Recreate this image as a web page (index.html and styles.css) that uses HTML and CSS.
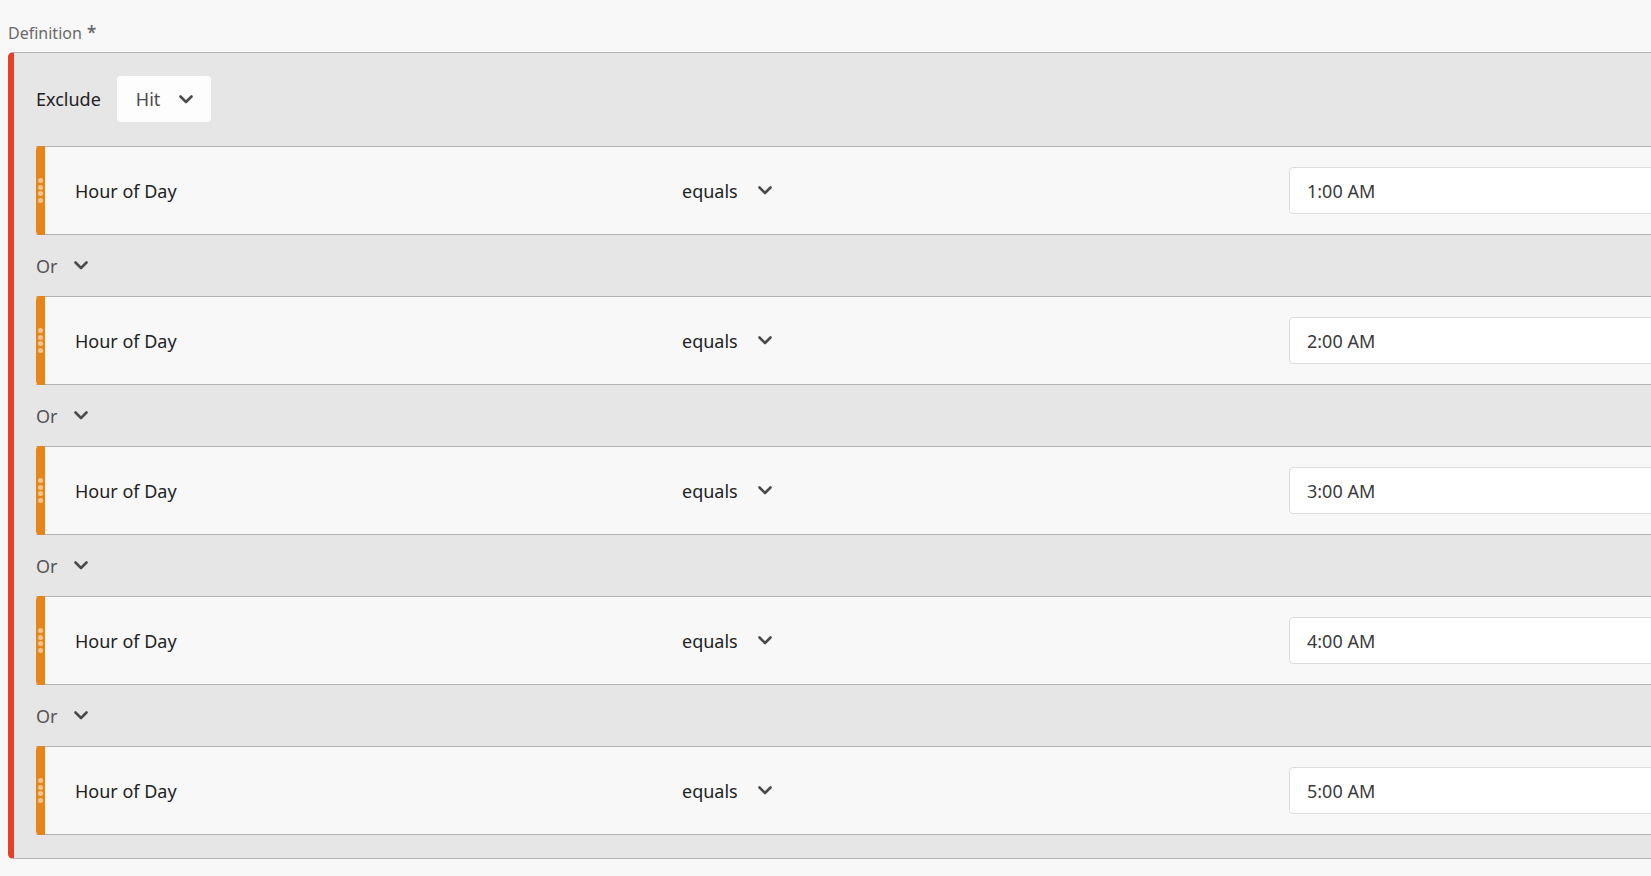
FILE: index.html
```html
<!DOCTYPE html>
<html>
<head>
<meta charset="utf-8">
<link rel="stylesheet" href="styles.css">
</head>
<body>
<div class="page">
  <div class="field-label">Definition <span class="req">*</span></div>
  <div class="container">
    <div class="header">
      <span class="exclude">Exclude</span>
      <div class="picker">
        <span>Hit</span>
        <svg class="chev" viewBox="0 0 14 9" width="14" height="9"><polyline points="1.5,1.5 7,7 12.5,1.5"/></svg>
      </div>
    </div>
    <div class="rule">
      <div class="handle"><i></i><i></i><i></i><i></i></div>
      <div class="name">Hour of Day</div>
      <div class="op"><span>equals</span><svg class="chev" viewBox="0 0 14 9" width="14" height="9"><polyline points="1.5,1.5 7,7 12.5,1.5"/></svg></div>
      <div class="value">1:00 AM</div>
    </div>
    <div class="or"><span>Or</span><svg class="chev" viewBox="0 0 14 9" width="14" height="9"><polyline points="1.5,1.5 7,7 12.5,1.5"/></svg></div>
    <div class="rule">
      <div class="handle"><i></i><i></i><i></i><i></i></div>
      <div class="name">Hour of Day</div>
      <div class="op"><span>equals</span><svg class="chev" viewBox="0 0 14 9" width="14" height="9"><polyline points="1.5,1.5 7,7 12.5,1.5"/></svg></div>
      <div class="value">2:00 AM</div>
    </div>
    <div class="or"><span>Or</span><svg class="chev" viewBox="0 0 14 9" width="14" height="9"><polyline points="1.5,1.5 7,7 12.5,1.5"/></svg></div>
    <div class="rule">
      <div class="handle"><i></i><i></i><i></i><i></i></div>
      <div class="name">Hour of Day</div>
      <div class="op"><span>equals</span><svg class="chev" viewBox="0 0 14 9" width="14" height="9"><polyline points="1.5,1.5 7,7 12.5,1.5"/></svg></div>
      <div class="value">3:00 AM</div>
    </div>
    <div class="or"><span>Or</span><svg class="chev" viewBox="0 0 14 9" width="14" height="9"><polyline points="1.5,1.5 7,7 12.5,1.5"/></svg></div>
    <div class="rule">
      <div class="handle"><i></i><i></i><i></i><i></i></div>
      <div class="name">Hour of Day</div>
      <div class="op"><span>equals</span><svg class="chev" viewBox="0 0 14 9" width="14" height="9"><polyline points="1.5,1.5 7,7 12.5,1.5"/></svg></div>
      <div class="value">4:00 AM</div>
    </div>
    <div class="or"><span>Or</span><svg class="chev" viewBox="0 0 14 9" width="14" height="9"><polyline points="1.5,1.5 7,7 12.5,1.5"/></svg></div>
    <div class="rule">
      <div class="handle"><i></i><i></i><i></i><i></i></div>
      <div class="name">Hour of Day</div>
      <div class="op"><span>equals</span><svg class="chev" viewBox="0 0 14 9" width="14" height="9"><polyline points="1.5,1.5 7,7 12.5,1.5"/></svg></div>
      <div class="value">5:00 AM</div>
    </div>
  </div>
</div>
</body>
</html>
```
FILE: styles.css
```css
html, body {
  margin: 0;
  padding: 0;
  background: #f8f8f8;
  overflow: hidden;
}
body {
  font-family: "Noto Sans", "Open Sans", sans-serif;
  color: #222222;
  width: 1651px;
  height: 876px;
}
.page {
  padding: 21px 0 0 8px;
}
.field-label {
  font-size: 16px;
  line-height: 24px;
  color: #6a6a6a;
  height: 24px;
  margin-bottom: 7px;
}
.req {
  font-size: 17px;
  font-weight: 600;
  margin-left: 1px;
}
.container {
  width: 1900px;
  background: #e6e6e6;
  border-top: 1px solid #b3b3b3;
  border-bottom: 1px solid #b3b3b3;
  border-left: 6px solid #e4402a;
  border-radius: 5px 0 0 5px;
  padding: 23px 0 23px 22px;
}
.header {
  display: flex;
  align-items: center;
  gap: 16px;
  height: 46px;
  margin-bottom: 24px;
}
.exclude {
  font-size: 18px;
}
.picker {
  width: 94px;
  height: 46px;
  box-sizing: border-box;
  background: #fdfdfd;
  border-radius: 4px;
  display: flex;
  align-items: center;
  padding-left: 19px;
  gap: 19px;
  font-size: 18px;
  color: #4b4b4b;
}
.chev {
  display: block;
  fill: none;
  stroke: #4b4b4b;
  stroke-width: 2.6;
  stroke-linecap: round;
  stroke-linejoin: round;
}
.rule {
  display: flex;
  align-items: center;
  height: 87px;
  background: #f8f8f8;
  border-top: 1px solid #b3b3b3;
  border-bottom: 1px solid #b3b3b3;
}
.handle {
  width: 9px;
  height: 89px;
  margin-top: -1px;
  margin-bottom: -1px;
  background: #e68619;
  border-radius: 4px 0 0 4px;
  display: flex;
  flex-direction: column;
  justify-content: center;
  align-items: center;
  gap: 1.5px;
  flex: none;
}
.handle i {
  display: block;
  width: 5px;
  height: 5px;
  border-radius: 50%;
  background: #f7c48b;
}
.name {
  width: 607px;
  padding-left: 30px;
  font-size: 18px;
  flex: none;
}
.op {
  width: 607px;
  flex: none;
  display: flex;
  align-items: center;
  gap: 20px;
  font-size: 18px;
}
.value {
  width: 600px;
  height: 47px;
  box-sizing: border-box;
  background: #ffffff;
  border: 1px solid #dcdcdc;
  border-radius: 4px;
  display: flex;
  align-items: center;
  padding-left: 17px;
  font-size: 18px;
  color: #3a3a3a;
}
.or {
  height: 61px;
  display: flex;
  align-items: center;
  gap: 18px;
  font-size: 18px;
  color: #555555;
}
.or span {
  width: 20px;
}
```
